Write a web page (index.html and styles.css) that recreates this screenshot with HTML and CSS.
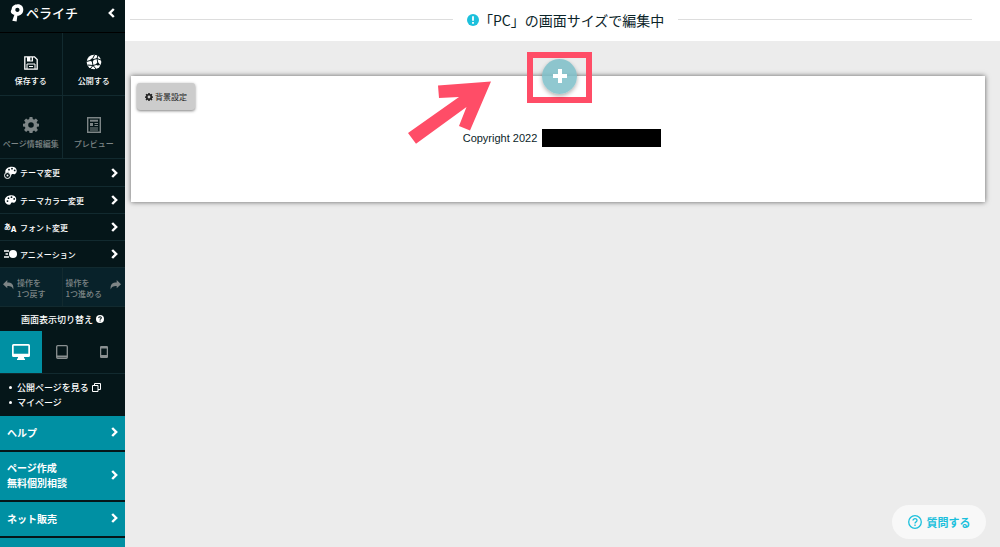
FILE: index.html
```
<!DOCTYPE html>
<html lang="ja">
<head>
  <meta charset="UTF-8" />
  <meta name="viewport" content="width=device-width, initial-scale=1.0"/>
  <title>ペライチ</title>
  <link rel="stylesheet" href="styles.css">
</head>
<body>
  <svg class="symbols" aria-hidden="true">
    <symbol id="chevron" viewBox="0 0 7 10"><path d="M1.200 1l4 4-4 4" fill="none" stroke="currentColor" stroke-width="2.400"/></symbol>
    <symbol id="gear" viewBox="0 0 16 16">
      <path fill="currentColor" fill-rule="evenodd" d="M6.600 0h2.800l.4 2.100 1.300.6 1.800-1.300 2 2-1.300 1.800.5 1.300 2.100.3v2.600l-2.100.4-.5 1.300 1.300 1.800-2 2-1.800-1.300-1.300.6-.4 2.100H6.600l-.4-2.100-1.300-.6-1.800 1.300-2-2 1.300-1.800-.5-1.300L0 9.400V6.800l1.900-.3.5-1.300-1.300-1.800 2-2 1.800 1.300 1.300-.6zM8 5.200a2.800 2.800 0 1 0 0 5.600 2.800 2.800 0 0 0 0-5.600z"/>
    </symbol>
    <symbol id="palette" viewBox="0 0 12 10">
      <path fill="currentColor" fill-rule="evenodd" d="M7 .3C3 .3.3 2.500.3 5.500c0 2.600 2 4.200 4.500 4.200 1.600 0 1.300-1.200 2-1.900.8-.8 2 .4 3.300-.4C11.300 6.700 11.800 5.500 11.700 4 11.600 1.800 9.700.3 7 .3zM4 2.300a.9.9 0 1 1 0 1.800.9.9 0 0 1 0-1.800zM7 1.300a.9.9 0 1 1 0 1.800.9.9 0 0 1 0-1.800zM9.700 3a.9.9 0 1 1 0 1.800.9.9 0 0 1 0-1.800zM3 5.200A.9.9 0 1 1 3 7a.9.9 0 0 1 0-1.800z"/>
    </symbol>
    <symbol id="reply" viewBox="0 0 11 10"><path fill="currentColor" d="M4.300 0v2.400C8.500 2.400 11 4 10.300 9.500 9.500 6.800 8 5.900 4.300 5.900v2.400L0 4.200z"/></symbol>
  </svg>

  <aside class="sidebar">
    <header class="brand">
      <a href="#" class="logo">
        <svg width="14" height="18" viewBox="0 0 14 18">
          <path fill="#fff" fill-rule="evenodd" d="M7.500.3C11 .1 13.300 2.500 13.300 5.700c0 3.600-2.500 6-5.900 6.100l-.8 5.700-4.300-.8 2.100-5.900C2.500 10.200.3 8.900.9 6.900c.3-1 .9-1.400.9-2.600C2 1.900 4.800.5 7.500.3zM7.300 3.700a2 2 0 0 0-2 2.100c0 1.300.8 2.200 2 2.200s2.200-1 2.200-2.300-.9-2-2.200-2z"/>
        </svg>
        <span>ペライチ</span>
      </a>
      <button class="collapse" aria-label="閉じる"><svg class="chevron back"><use href="#chevron"/></svg></button>
    </header>

    <div class="tools">
      <button class="tool">
        <svg width="14" height="14" viewBox="0 0 14 14">
          <path d="M.8.8h9.700l2.700 2.700v9.700H.8z" fill="none" stroke="#fff" stroke-width="1.300"/>
          <path d="M3 1h6v4.500H3z" fill="#fff"/>
          <path d="M6.300 1.500h1.400v3H6.300z" fill="#051619"/>
          <path d="M3 13V8h8v5M5 10.500h4" fill="none" stroke="#fff"/>
        </svg>
        <span>保存する</span>
      </button>
      <button class="tool">
        <svg width="16" height="16" viewBox="0 0 16 16">
          <circle cx="8" cy="8" r="7.300" fill="#fff"/>
          <path d="M.5 7.500L6 6l2.500-5M6 6l5-1.500L15 6M11 4.500L12 1M6 6l1 5.500L4 15M7 11.500l5-1.500-1-5.500M12 10l3 1.500M7 11.500L1.500 11M7 11.500l3.500 4" stroke="#051619" stroke-width="1" fill="none"/>
          <circle cx="6" cy="6" r="1.600" fill="#051619"/><circle cx="11.800" cy="10" r="1.500" fill="#051619"/>
        </svg>
        <span>公開する</span>
      </button>
      <button class="tool muted">
        <svg width="16" height="16"><use href="#gear"/></svg>
        <span>ページ情報編集</span>
      </button>
      <button class="tool muted">
        <svg width="14" height="16" viewBox="0 0 14 16" fill="none" stroke="currentColor">
          <path d="M.7.7h12.600v14.600H.7z" stroke-width="1.400"/>
          <path d="M3 3.700h8" stroke-width="2"/>
          <path d="M7.500 6.500H11M7.500 8.500H11M3 11h8M3 13h8"/>
          <path d="M3 7.500h3" stroke-width="3"/>
        </svg>
        <span>プレビュー</span>
      </button>
    </div>

    <nav class="menu">
      <a href="#">
        <svg width="13" height="13" viewBox="0 0 13 13">
          <svg x="1" y="0" width="12" height="11"><use href="#palette"/></svg>
          <circle cx="3.500" cy="9.500" r="3" fill="#051619" stroke="#fff"/><circle cx="3.500" cy="9.500" r="1" fill="#fff"/>
        </svg>
        <span>テーマ変更</span><svg class="chevron"><use href="#chevron"/></svg>
      </a>
      <a href="#">
        <svg width="13" height="10"><use href="#palette"/></svg>
        <span>テーマカラー変更</span><svg class="chevron"><use href="#chevron"/></svg>
      </a>
      <a href="#">
        <span class="font-icon" aria-hidden="true">あ<b>A</b></span>
        <span>フォント変更</span><svg class="chevron"><use href="#chevron"/></svg>
      </a>
      <a href="#">
        <svg width="13" height="10" viewBox="0 0 13 10"><circle cx="9" cy="5" r="4" fill="#fff"/><path d="M0 2h5M1.500 5H4M0 8h5" stroke="#fff" stroke-width="1.300"/></svg>
        <span>アニメーション</span><svg class="chevron"><use href="#chevron"/></svg>
      </a>
    </nav>

    <div class="history">
      <button><svg width="11" height="10"><use href="#reply"/></svg><span>操作を<br>1つ戻す</span></button>
      <button><span>操作を<br>1つ進める</span><svg class="flip" width="11" height="10"><use href="#reply"/></svg></button>
    </div>

    <div class="view-label">
      <span>画面表示切り替え</span>
      <svg width="8" height="8" viewBox="0 0 8 8"><circle cx="4" cy="4" r="4" fill="#fff"/><path d="M2.700 3.100C2.800 1.300 5.500 1.500 5.300 3c-.1.800-1.200.8-1.200 1.800M4.100 5.500v1" fill="none" stroke="#051619" stroke-width="1.100"/></svg>
    </div>

    <div class="devices">
      <button class="active" aria-label="PC">
        <svg width="18" height="16" viewBox="0 0 18 16"><path fill="#fff" fill-rule="evenodd" d="M1.500 0h15A1.500 1.500 0 0 1 18 1.500v10a1.500 1.500 0 0 1-1.500 1.500H12v1.500h1V16H5v-1.500h1V13H1.500A1.500 1.500 0 0 1 0 11.500v-10A1.500 1.500 0 0 1 1.500 0zm.2 1.700v8h14.600v-8z"/></svg>
      </button>
      <button aria-label="タブレット">
        <svg width="12" height="14" viewBox="0 0 12 14"><rect x=".7" y=".7" width="10.600" height="12.600" rx="1" fill="none" stroke="currentColor" stroke-width="1.300"/><path d="M1 11.500h10" stroke="currentColor" stroke-width="2"/></svg>
      </button>
      <button aria-label="スマートフォン">
        <svg width="8" height="12" viewBox="0 0 8 12"><rect x=".6" y=".6" width="6.800" height="10.800" rx="1" fill="none" stroke="currentColor" stroke-width="1.300"/><path d="M1 1.500h6M1 10h6" stroke="currentColor" stroke-width="2"/></svg>
      </button>
    </div>

    <ul class="links">
      <li><a href="#">公開ページを見る <svg width="9" height="9" viewBox="0 0 9 9" fill="none" stroke="currentColor"><path d="M.5 2.500h5.500v6H.5zM2.500 2.500v-2h6v6H6"/></svg></a></li>
      <li><a href="#">マイページ</a></li>
    </ul>

    <nav class="support">
      <a href="#"><span>ヘルプ</span><svg class="chevron"><use href="#chevron"/></svg></a>
      <a href="#"><span>ページ作成<br>無料個別相談</span><svg class="chevron"><use href="#chevron"/></svg></a>
      <a href="#"><span>ネット販売</span><svg class="chevron"><use href="#chevron"/></svg></a>
      <a href="#" aria-label="その他"></a>
    </nav>
  </aside>

  <main class="editor">
    <div class="status">
      <svg width="12" height="12" viewBox="0 0 12 12"><circle cx="6" cy="6" r="6" fill="#1cc0dc"/><path d="M6 2.300v4.400M6 8v1.800" stroke="#fff" stroke-width="1.800"/></svg>
      <span>「PC」の画面サイズで編集中</span>
    </div>

    <section class="block">
      <button class="bg-setting"><svg width="8" height="8"><use href="#gear"/></svg>背景設定</button>
      <p class="copyright">Copyright 2022 <span class="redacted"></span></p>
      <div class="highlight">
        <button class="add" aria-label="追加"><svg width="14" height="14" viewBox="0 0 14 14"><path d="M7 0v14M0 7h14" stroke="#fff" stroke-width="4"/></svg></button>
      </div>
      <svg class="arrow" width="84" height="64" viewBox="0 0 84 64"><path fill="#ff4d67" d="M83 1.500L62 50.500 51 46l7.500-19L8 63.700 0 53l51-36-20 1-1-12.500z"/></svg>
    </section>

    <button class="question">
      <svg width="14" height="14" viewBox="0 0 14 14" fill="none" stroke="currentColor"><circle cx="7" cy="7" r="6.300" stroke-width="1.300"/><path d="M5 5.600C5 3 9 3.200 9 5.500 9 7 7 6.800 7 8.500M7 9.600V11" stroke-width="1.300"/></svg>
      質問する
    </button>
  </main>
</body>
</html>
```
FILE: styles.css
```
* {
  box-sizing: border-box;
}

body {
  margin: 0;
  display: flex;
  height: 100vh;
  overflow: hidden;
  font-family: "Noto Sans CJK JP", sans-serif;
  color: #0b2429;
  background: #ececec;
}

a {
  color: inherit;
  text-decoration: none;
}

button {
  padding: 0;
  border: none;
  background: none;
  font: inherit;
  color: inherit;
  cursor: pointer;
}

svg {
  flex: none;
}

.symbols {
  position: absolute;
  width: 0;
  height: 0;
}

.chevron {
  width: 7px;
  height: 10px;
}

.back,
.flip {
  transform: scaleX(-1);
}

/* sidebar */
.sidebar {
  flex: none;
  width: 125px;
  overflow: hidden;
  background: #051619;
  color: #fff;
  font-size: 8px;
  font-weight: 500;
  line-height: 11px;
}

.brand {
  display: flex;
  align-items: center;
  justify-content: space-between;
  height: 33px;
  padding: 0 10px 6px 10px;
  border-bottom: 1px solid #000;
}

.logo {
  display: flex;
  align-items: center;
  gap: 2px;
  font-size: 13px;
  line-height: 18px;
}

.collapse {
  display: flex;
}

.tools {
  display: grid;
  grid-template-columns: 1fr 1fr;
}

.tool {
  display: flex;
  flex-direction: column;
  align-items: center;
  justify-content: flex-end;
  gap: 5px;
  height: 63px;
  padding-bottom: 9px;
  border-bottom: 1px solid #122a2f;
  white-space: nowrap;
}

.tool:nth-child(odd) {
  border-right: 1px solid #122a2f;
}

.muted {
  color: #7d8586;
}

.menu a {
  display: flex;
  align-items: center;
  gap: 3px;
  height: 27px;
  padding: 0 7px 0 4px;
  border-bottom: 1px solid #122a2f;
}

.menu a:first-child {
  height: 28px;
}

.menu .chevron,
.support .chevron {
  margin-left: auto;
}

.font-icon {
  width: 13px;
  font-size: 7px;
  font-weight: 700;
  white-space: nowrap;
}

.font-icon b {
  font-size: 8px;
  vertical-align: -3px;
}

.history {
  display: grid;
  grid-template-columns: 1fr 1fr;
  background: #08222a;
  color: #7d8586;
}

.history button {
  display: flex;
  justify-content: space-between;
  gap: 3px;
  height: 39px;
  padding: 9px 4px 0 3px;
  border-bottom: 1px solid #122a2f;
  text-align: left;
  white-space: nowrap;
}

.history button:first-child {
  justify-content: flex-start;
  border-right: 1px solid #122a2f;
}

.history svg {
  margin-top: 3px;
}

.view-label {
  display: flex;
  align-items: center;
  justify-content: center;
  gap: 3px;
  height: 24px;
  font-size: 9px;
}

.devices {
  display: grid;
  grid-template-columns: 1fr 1fr 1fr;
  height: 42px;
  color: #8a9091;
}

.devices button {
  display: flex;
  align-items: center;
  justify-content: center;
}

.devices .active {
  background: #0090a3;
}

.links {
  margin: 0;
  padding: 6px 0 6px 9px;
  border-top: 1px solid #122a2f;
  list-style: none;
  font-size: 9px;
  line-height: 15px;
}

.links li {
  display: flex;
  align-items: center;
  gap: 5px;
}

.links li::before {
  content: "";
  width: 3px;
  height: 3px;
  border-radius: 50%;
  background: #fff;
}

.links svg {
  margin-left: 1px;
  vertical-align: -1px;
}

.support {
  font-size: 10px;
  font-weight: 700;
  line-height: 15px;
}

.support a {
  display: flex;
  align-items: center;
  min-height: 36px;
  padding: 8px 7px 10px 7px;
  border-bottom: 2px solid #051619;
  background: #0090a3;
}

/* editor */
.editor {
  flex: 1;
  position: relative;
}

.status {
  display: flex;
  align-items: center;
  height: 41px;
  padding: 0 28px 2px 5px;
  background: #fff;
  font-size: 14px;
  line-height: 20px;
}

.status::before,
.status::after {
  content: "";
  flex: 11;
  height: 1px;
  background: #ddd;
}

.status::before {
  margin-right: 14px;
}

.status::after {
  flex: 10;
  margin-left: 14px;
}

.block {
  position: relative;
  height: 126px;
  margin: 35px 15px 0 6px;
  padding-top: 53px;
  background: #fff;
  box-shadow: 0 0 5px rgba(0, 0, 0, 0.6);
}

.bg-setting {
  position: absolute;
  top: 7px;
  left: 6px;
  display: flex;
  align-items: center;
  justify-content: center;
  gap: 2px;
  width: 58px;
  height: 27px;
  border-radius: 3px;
  background: #ccc;
  box-shadow: 0 1px 3px rgba(0, 0, 0, 0.5);
  color: #222;
  font-size: 8px;
}

.copyright {
  display: flex;
  align-items: center;
  justify-content: center;
  gap: 5px;
  margin: 0;
  padding-left: 8px;
  font-family: "Liberation Sans", sans-serif;
  font-size: 11px;
  line-height: 18px;
}

.redacted {
  width: 119px;
  height: 18px;
  background: #000;
}

.highlight {
  position: absolute;
  top: -24px;
  left: 50%;
  display: flex;
  align-items: center;
  justify-content: center;
  width: 65px;
  height: 51px;
  margin-left: -31px;
  padding-bottom: 3px;
  border: 6px solid #ff4d67;
}

.add {
  display: flex;
  align-items: center;
  justify-content: center;
  width: 35px;
  height: 35px;
  border-radius: 50%;
  background: rgba(125, 190, 200, 0.85);
  box-shadow: 0 2px 4px rgba(0, 0, 0, 0.3);
}

.arrow {
  position: absolute;
  top: 4px;
  left: 50%;
  margin-left: -150px;
}

.question {
  position: absolute;
  right: 14px;
  bottom: 8px;
  display: flex;
  align-items: center;
  justify-content: center;
  gap: 5px;
  width: 94px;
  height: 34px;
  border-radius: 17px;
  background: #f8f8f8;
  color: #1cc0dc;
  font-size: 11px;
  font-weight: 700;
}
```
